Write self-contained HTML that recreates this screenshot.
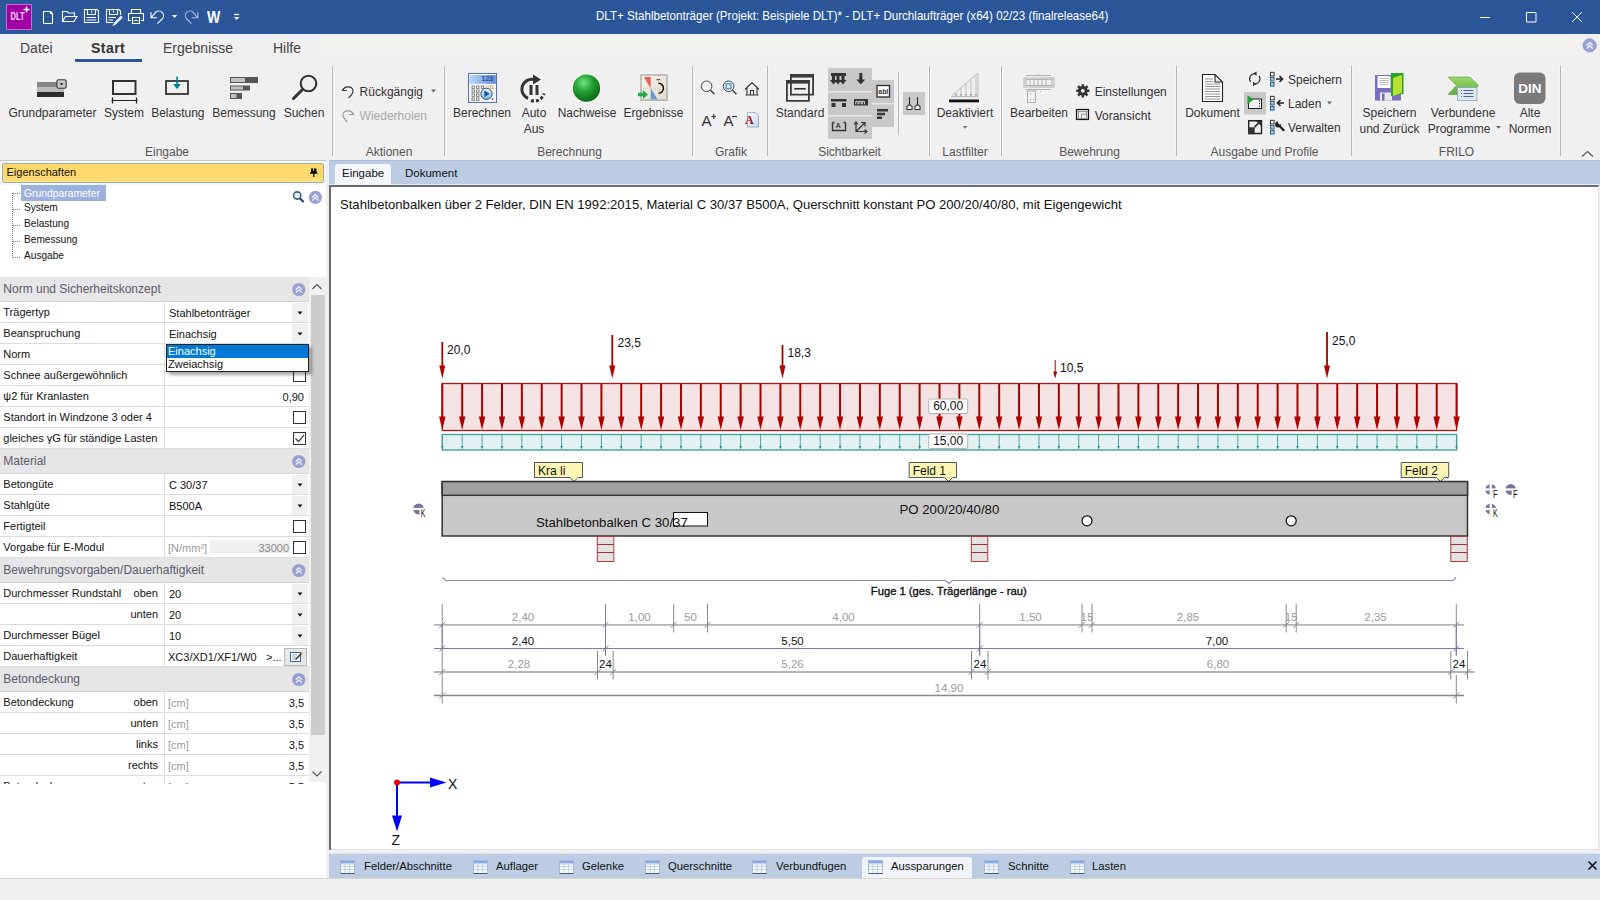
<!DOCTYPE html>
<html><head><meta charset="utf-8"><title>DLT+</title>
<style>
html,body{margin:0;padding:0;}
body{width:1600px;height:900px;overflow:hidden;position:relative;background:#f0f0f0;font-family:"Liberation Sans", sans-serif;}
.t{position:absolute;white-space:nowrap;line-height:1;}
.r{position:absolute;}
svg{position:absolute;overflow:visible;}
</style></head><body>

<div class="r" style="left:0px;top:0px;width:1600px;height:34px;background:#2b579a;"></div>
<div class="r" style="left:6px;top:4px;width:26px;height:26px;background:#a100a6;box-sizing:border-box;border:1px solid #c46fc6;"></div>
<svg style="left:0;top:0" width="40" height="34" viewBox="0 0 40 34"><text x="10.5" y="20.5" font-family="Liberation Sans" font-weight="bold" font-size="10" fill="#ffd6ff" transform="scale(1,1.15) translate(0,-2.9)" textLength="14" lengthAdjust="spacingAndGlyphs">DLT</text><path d="M23.5 9.5h6M26.5 6.5v6" stroke="#fff" stroke-width="1.4"/></svg>
<svg style="left:0;top:0" width="260" height="34" viewBox="0 0 260 34" fill="none" stroke="#fff" stroke-width="1.1">
<path d="M43.5 11.5H50.5L52.5 13.5V23.5H43.5Z M50.5 11.5V13.5H52.5"/>
<path d="M62.5 21.5V11.5H67L68.5 13H74.5V16 M62.5 21.5L65.5 16.5H77L74 21.5Z"/>
<path d="M84.5 9.5H97L98.5 11V22.5H84.5Z M87.5 9.5V14.5H95.5V9.5 M91.5 10.5V12.5 M86.5 17.5H96 M86.5 20H96"/>
<path d="M106.5 9.5H119L120.5 11V15 M106.5 9.5V22.5H113 M109.5 9.5V14.5H117.5V9.5 M113.5 10.5V12.5 M108.5 17.5H116 M108.5 20H113 M121 16.5L114.5 23L113.5 25L115.5 24L122 17.5Z"/>
<path d="M131.5 13V9.5H140.5V13 M131 20.5H128.5V13.5H143.5V20.5H141 M132.5 17.5H139.5V23.5H132.5Z M134 20.5H138"/>
<path d="M151 12.2V17.8H156.9 M151.3 17.5L155.75 12.25A4.6 4.6 0 0 1 162.25 18.75L157.4 23.6"/>
<path d="M172 15h5.2l-2.6 3z" fill="#fff" stroke="none"/>
<path d="M197.8 12.2V17.8H191.9 M197.5 17.5L193.05 12.25A4.6 4.6 0 0 0 186.55 18.75L191.4 23.6" stroke="#a9bde3"/>
<path d="M234 14.5h5.2" stroke-width="1.3"/><path d="M233.8 17h5.6l-2.8 3z" fill="#fff" stroke="none"/>
</svg>
<div class="t" style="left:206.5px;top:9.66px;font-size:16px;color:#fff;font-weight:bold;transform:scaleX(0.88);transform-origin:0 0;">W</div>
<div class="t" style="left:596px;top:9.53px;font-size:12.6px;color:#fff;font-weight:normal;transform:scaleX(0.9206);transform-origin:0 0;">DLT+ Stahlbetonträger (Projekt: Beispiele DLT)* - DLT+ Durchlaufträger (x64) 02/23 (finalrelease64)</div>
<svg style="left:1460px;top:0" width="140" height="34" viewBox="1460 0 140 34" fill="none" stroke="#fff" stroke-width="1">
<path d="M1480 17.5h10"/>
<path d="M1526.5 12.5h9.5v9.5h-9.5z"/>
<path d="M1572 12l10 10 M1582 12l-10 10"/>
</svg>
<div class="r" style="left:0px;top:34px;width:1600px;height:126px;background:#f0f0f0;"></div>
<div class="r" style="left:320px;top:35px;width:1258px;height:27px;background:#f2f1ef;"></div>
<div class="r" style="left:0px;top:34px;width:1600px;height:1px;background:#e8f0f8;"></div>
<div class="t" style="left:20px;top:41.15px;font-size:14px;color:#444;font-weight:normal;">Datei</div>
<div class="t" style="left:91px;top:41.15px;font-size:14px;color:#333;font-weight:bold;letter-spacing:0.45px">Start</div>
<div class="t" style="left:163px;top:41.15px;font-size:14px;color:#444;font-weight:normal;">Ergebnisse</div>
<div class="t" style="left:273px;top:41.15px;font-size:14px;color:#444;font-weight:normal;">Hilfe</div>
<div class="r" style="left:75px;top:59px;width:67px;height:3px;background:#2b579a;"></div>
<div class="r" style="left:331px;top:66px;width:3px;height:90px;background:#f6f6f6;"></div>
<div class="r" style="left:332px;top:66px;width:1px;height:90px;background:#b4b4b4;"></div>
<div class="r" style="left:443px;top:66px;width:3px;height:90px;background:#f6f6f6;"></div>
<div class="r" style="left:444px;top:66px;width:1px;height:90px;background:#b4b4b4;"></div>
<div class="r" style="left:691px;top:66px;width:3px;height:90px;background:#f6f6f6;"></div>
<div class="r" style="left:692px;top:66px;width:1px;height:90px;background:#b4b4b4;"></div>
<div class="r" style="left:766px;top:66px;width:3px;height:90px;background:#f6f6f6;"></div>
<div class="r" style="left:767px;top:66px;width:1px;height:90px;background:#b4b4b4;"></div>
<div class="r" style="left:928px;top:66px;width:3px;height:90px;background:#f6f6f6;"></div>
<div class="r" style="left:929px;top:66px;width:1px;height:90px;background:#b4b4b4;"></div>
<div class="r" style="left:1000px;top:66px;width:3px;height:90px;background:#f6f6f6;"></div>
<div class="r" style="left:1001px;top:66px;width:1px;height:90px;background:#b4b4b4;"></div>
<div class="r" style="left:1175px;top:66px;width:3px;height:90px;background:#f6f6f6;"></div>
<div class="r" style="left:1176px;top:66px;width:1px;height:90px;background:#b4b4b4;"></div>
<div class="r" style="left:1350px;top:66px;width:3px;height:90px;background:#f6f6f6;"></div>
<div class="r" style="left:1351px;top:66px;width:1px;height:90px;background:#b4b4b4;"></div>
<div class="r" style="left:1559px;top:66px;width:3px;height:90px;background:#f6f6f6;"></div>
<div class="r" style="left:1560px;top:66px;width:1px;height:90px;background:#b4b4b4;"></div>
<div class="r" style="left:897px;top:72px;width:3px;height:63px;background:#f6f6f6;"></div>
<div class="r" style="left:898px;top:72px;width:1px;height:63px;background:#b4b4b4;"></div>
<div class="t" style="left:-133px;width:600px;text-align:center;top:145.84px;font-size:12px;color:#555;font-weight:normal;">Eingabe</div>
<div class="t" style="left:89px;width:600px;text-align:center;top:145.84px;font-size:12px;color:#555;font-weight:normal;">Aktionen</div>
<div class="t" style="left:269.5px;width:600px;text-align:center;top:145.84px;font-size:12px;color:#555;font-weight:normal;">Berechnung</div>
<div class="t" style="left:431px;width:600px;text-align:center;top:145.84px;font-size:12px;color:#555;font-weight:normal;">Grafik</div>
<div class="t" style="left:549.5px;width:600px;text-align:center;top:145.84px;font-size:12px;color:#555;font-weight:normal;">Sichtbarkeit</div>
<div class="t" style="left:665px;width:600px;text-align:center;top:145.84px;font-size:12px;color:#555;font-weight:normal;">Lastfilter</div>
<div class="t" style="left:789.5px;width:600px;text-align:center;top:145.84px;font-size:12px;color:#555;font-weight:normal;">Bewehrung</div>
<div class="t" style="left:964.5px;width:600px;text-align:center;top:145.84px;font-size:12px;color:#555;font-weight:normal;">Ausgabe und Profile</div>
<div class="t" style="left:1156.5px;width:600px;text-align:center;top:145.84px;font-size:12px;color:#555;font-weight:normal;">FRILO</div>
<div class="t" style="left:-247.5px;width:600px;text-align:center;top:106.54px;font-size:12px;color:#333;font-weight:normal;">Grundparameter</div>
<div class="t" style="left:-176px;width:600px;text-align:center;top:106.54px;font-size:12px;color:#333;font-weight:normal;">System</div>
<div class="t" style="left:-122.19999999999999px;width:600px;text-align:center;top:106.54px;font-size:12px;color:#333;font-weight:normal;">Belastung</div>
<div class="t" style="left:-56px;width:600px;text-align:center;top:106.54px;font-size:12px;color:#333;font-weight:normal;">Bemessung</div>
<div class="t" style="left:4px;width:600px;text-align:center;top:106.54px;font-size:12px;color:#333;font-weight:normal;">Suchen</div>
<div class="t" style="left:182px;width:600px;text-align:center;top:106.54px;font-size:12px;color:#333;font-weight:normal;">Berechnen</div>
<div class="t" style="left:234px;width:600px;text-align:center;top:106.54px;font-size:12px;color:#333;font-weight:normal;">Auto</div>
<div class="t" style="left:287px;width:600px;text-align:center;top:106.54px;font-size:12px;color:#333;font-weight:normal;">Nachweise</div>
<div class="t" style="left:353.5px;width:600px;text-align:center;top:106.54px;font-size:12px;color:#333;font-weight:normal;">Ergebnisse</div>
<div class="t" style="left:500px;width:600px;text-align:center;top:106.54px;font-size:12px;color:#333;font-weight:normal;">Standard</div>
<div class="t" style="left:665px;width:600px;text-align:center;top:106.54px;font-size:12px;color:#333;font-weight:normal;">Deaktiviert</div>
<div class="t" style="left:739px;width:600px;text-align:center;top:106.54px;font-size:12px;color:#333;font-weight:normal;">Bearbeiten</div>
<div class="t" style="left:912.5px;width:600px;text-align:center;top:106.54px;font-size:12px;color:#333;font-weight:normal;">Dokument</div>
<div class="t" style="left:1089.5px;width:600px;text-align:center;top:106.54px;font-size:12px;color:#333;font-weight:normal;">Speichern</div>
<div class="t" style="left:1163px;width:600px;text-align:center;top:106.54px;font-size:12px;color:#333;font-weight:normal;">Verbundene</div>
<div class="t" style="left:1230px;width:600px;text-align:center;top:106.54px;font-size:12px;color:#333;font-weight:normal;">Alte</div>
<div class="t" style="left:234px;width:600px;text-align:center;top:122.54px;font-size:12px;color:#333;font-weight:normal;">Aus</div>
<div class="t" style="left:1089.5px;width:600px;text-align:center;top:122.54px;font-size:12px;color:#333;font-weight:normal;">und Zurück</div>
<div class="t" style="left:1159px;width:600px;text-align:center;top:122.54px;font-size:12px;color:#333;font-weight:normal;">Programme</div>
<div class="t" style="left:1230px;width:600px;text-align:center;top:122.54px;font-size:12px;color:#333;font-weight:normal;">Normen</div>
<div class="t" style="left:359.6px;top:85.84px;font-size:12px;color:#333;font-weight:normal;">Rückgängig</div>
<div class="t" style="left:359.6px;top:109.84px;font-size:12px;color:#a8a8a8;font-weight:normal;">Wiederholen</div>
<div class="t" style="left:1094.7px;top:85.84px;font-size:12px;color:#333;font-weight:normal;">Einstellungen</div>
<div class="t" style="left:1094.7px;top:109.84px;font-size:12px;color:#333;font-weight:normal;">Voransicht</div>
<div class="t" style="left:1288px;top:73.84px;font-size:12px;color:#333;font-weight:normal;">Speichern</div>
<div class="t" style="left:1288px;top:97.84px;font-size:12px;color:#333;font-weight:normal;">Laden</div>
<div class="t" style="left:1288px;top:121.84px;font-size:12px;color:#333;font-weight:normal;">Verwalten</div>
<svg style="left:0;top:34px" width="1600" height="126" viewBox="0 34 1600 126">
<defs>
<radialGradient id="gs" cx="0.4" cy="0.3" r="0.75"><stop offset="0" stop-color="#6fe07a"/><stop offset="0.45" stop-color="#23a032"/><stop offset="1" stop-color="#0b5f15"/></radialGradient>
<linearGradient id="calhd" x1="0" y1="0" x2="1" y2="0"><stop offset="0" stop-color="#bcd6f5"/><stop offset="1" stop-color="#5b8fd8"/></linearGradient>
</defs>
<!-- Grundparameter -->
<rect x="37" y="82" width="27" height="5" fill="#858585"/>
<rect x="37" y="87" width="27" height="5" fill="#bdbdbd"/>
<rect x="37" y="92" width="27" height="5" fill="#2e2e2e"/>
<rect x="56.9" y="79.7" width="9.3" height="8.6" rx="1.5" fill="#c6c6c6" stroke="#3a3a3a" stroke-width="1.1"/>
<path d="M59.6 83.2h3.9l-1.95 2.1z" fill="#111"/>
<!-- System -->
<rect x="113" y="81" width="22.5" height="13" fill="none" stroke="#333" stroke-width="2"/>
<path d="M111.5 100.5h26 M112.5 97.5v6 M136.5 97.5v6" stroke="#222" stroke-width="1.2" fill="none"/>
<!-- Belastung -->
<rect x="166" y="81" width="22" height="13" fill="none" stroke="#333" stroke-width="1.8"/>
<path d="M177 76.5v8" stroke="#00808a" stroke-width="1.6"/>
<path d="M173 84h8l-4 5z" fill="#00808a"/>
<!-- Bemessung -->
<rect x="230" y="77" width="28" height="6" fill="#555"/><rect x="231" y="78" width="14" height="4" fill="#c3c3c3"/>
<rect x="230" y="85.5" width="20" height="5" fill="#555"/><rect x="231" y="86.5" width="12" height="3" fill="#c3c3c3"/>
<rect x="230" y="93" width="12" height="6" fill="#555"/><rect x="231" y="94" width="5.5" height="4" fill="#c3c3c3"/>
<!-- Suchen -->
<circle cx="308.5" cy="83.5" r="7.8" fill="none" stroke="#333" stroke-width="2"/>
<path d="M302.5 89.5l-9 9" stroke="#333" stroke-width="3" stroke-linecap="round"/>
<!-- Undo / redo small -->
<path d="M342 90.5l3.5-3.5 M342 90.5h4.8 M342.5 90c2.5-4 9.5-4.5 10.5 0.5 0.6 2.8-2 5-4.5 7.5" stroke="#333" stroke-width="1.1" fill="none"/>
<path d="M431 89.5h5l-2.5 3z" fill="#666"/>
<path d="M354 114.5l-3.5-3.5 M354 114.5h-4.8 M353.5 114c-2.5-4-9.5-4.5-10.5 0.5-0.6 2.8 2 5 4.5 7.5" stroke="#999" stroke-width="1.1" fill="none"/>
<!-- Berechnen -->
<linearGradient id="pc" x1="0" y1="0" x2="0" y2="1"><stop offset="0" stop-color="#e6f6ff"/><stop offset="1" stop-color="#6cb8ee"/></linearGradient>
<rect x="468.5" y="73.5" width="28" height="29" fill="#f4f8fd" stroke="#5a78a8" stroke-width="1.1"/>
<rect x="469.2" y="74.8" width="26.6" height="9" fill="url(#calhd)"/>
<path d="M469.2 74.6h26.6" stroke="#fff" stroke-width="0.8"/>
<text x="481.5" y="81.2" font-family="Liberation Sans" font-weight="bold" font-size="7" fill="#1f4fa0">123</text>
<g fill="#fff" stroke="#777" stroke-width="0.9">
<rect x="472" y="86" width="2.4" height="2.4"/><rect x="476.6" y="86" width="2.4" height="2.4"/><rect x="481.2" y="86" width="2.4" height="2.4"/><rect x="485.8" y="86" width="2.4" height="2.4" stroke="#d8b890"/><rect x="490.4" y="86" width="2.4" height="2.4" stroke="#e0a040"/>
<rect x="472" y="90" width="2.4" height="2.4"/><rect x="476.6" y="90" width="2.4" height="2.4"/>
<rect x="472" y="94" width="2.4" height="2.4"/><rect x="476.6" y="94" width="2.4" height="2.4"/>
<rect x="472" y="98" width="2.4" height="2.4"/><rect x="476.6" y="98" width="2.4" height="2.4"/>
</g>
<circle cx="486.5" cy="93.8" r="5.6" fill="url(#pc)" stroke="#24405e" stroke-width="0.9"/>
<path d="M484.4 90.6v6.4l5.2-3.2z" fill="#1a4f9e"/>
<circle cx="492.5" cy="99" r="0.9" fill="#d04030"/>
<!-- Auto Aus -->
<path d="M528 98.5a10 10 0 0 1 6-19" fill="none" stroke="#333" stroke-width="3"/>
<path d="M533 74.5l8 5-8 5z" fill="#333"/>
<path d="M531 100.5a10 10 0 0 0 13-7" fill="none" stroke="#333" stroke-width="3" stroke-dasharray="3 2"/>
<rect x="529.5" y="85" width="3" height="10" fill="#333"/><rect x="535.5" y="85" width="3" height="10" fill="#333"/>
<!-- Nachweise -->
<circle cx="586.5" cy="88.2" r="13.6" fill="url(#gs)"/>
<!-- Ergebnisse -->
<linearGradient id="erg" x1="0" y1="0" x2="1" y2="1"><stop offset="0" stop-color="#f6f3ea"/><stop offset="1" stop-color="#e2dccb"/></linearGradient>
<rect x="641" y="75" width="26" height="25.2" fill="url(#erg)" stroke="#b5b5b5" stroke-width="1.6"/>
<path d="M643.9 77H650.7V88.3z" fill="#ee5a5a"/>
<path d="M650.7 88.3V99.6H657.7z" fill="#6f98cc"/>
<path d="M643 88.2H661" stroke="#bbb" stroke-width="0.7" stroke-dasharray="1 1"/>
<path d="M658.3 83.2A5 5 0 0 1 658.5 93.3" fill="none" stroke="#111" stroke-width="1.5"/>
<path d="M656.6 80.3l0.9-1.3 0.9 1.3 0.9-1.3 0.9 1.3" fill="none" stroke="#222" stroke-width="0.8"/>
<path d="M638 92.8h5v-2.6l5 4.3-5 4.3v-2.6h-5z" fill="#20aa48"/>
</svg>
<svg style="left:0;top:34px" width="1600" height="126" viewBox="0 34 1600 126">
<defs>
<linearGradient id="docg" x1="0" y1="0" x2="1" y2="1"><stop offset="0" stop-color="#ffffff"/><stop offset="1" stop-color="#c5d4ec"/></linearGradient>
<linearGradient id="grg" x1="0" y1="0" x2="0" y2="1"><stop offset="0" stop-color="#9ad86a"/><stop offset="1" stop-color="#5cb040"/></linearGradient>
</defs>
<!-- Grafik -->
<circle cx="706.6" cy="86.3" r="5.3" fill="none" stroke="#444" stroke-width="1"/>
<path d="M710.5 90.2l4 4" stroke="#444" stroke-width="1.6"/>
<circle cx="728.6" cy="86.3" r="5.3" fill="none" stroke="#444" stroke-width="1"/>
<path d="M732.5 90.2l4 4" stroke="#444" stroke-width="1.6"/>
<rect x="726" y="83.8" width="5" height="5" fill="#cde6f5" stroke="#2a7ab0" stroke-width="1"/>
<path d="M745 89.5l7-7 7 7 M747 88v7h3.5v-4.5h3v4.5h3.5v-7 M745.5 95h13" fill="none" stroke="#333" stroke-width="1.1"/>
<text x="701.5" y="126" font-family="Liberation Sans" font-size="15" fill="#333">A</text>
<path d="M711.5 116.5h4.5 M713.75 114v5" stroke="#333" stroke-width="1.2"/>
<text x="723.5" y="126" font-family="Liberation Sans" font-size="15" fill="#333">A</text>
<path d="M732 116.5h5" stroke="#333" stroke-width="1.2"/>
<path d="M747.5 112.5h8l3 3v11.5h-11z" fill="url(#docg)" stroke="#8aa0c0" stroke-width="0.8"/>
<text x="745" y="124" font-family="Liberation Serif" font-weight="bold" font-size="12" fill="#a01010">A</text>
<!-- Standard -->
<path d="M790.9 74.9H813.1V94.7H790.9Z M786.9 80.9H808.9V100.9H786.9Z" fill="none" stroke="#3a3a3a" stroke-width="1.8"/>
<rect x="790" y="74" width="24" height="3.6" fill="#3a3a3a"/><rect x="786" y="80" width="24" height="3.6" fill="#3a3a3a"/>
<path d="M794.3 88.8H805.7" stroke="#333" stroke-width="1.7"/>
<!-- Sichtbarkeit blocks -->
<rect x="828" y="68" width="44" height="71" fill="#c8c8c8"/>
<rect x="872" y="80" width="22" height="47" fill="#c8c8c8"/>
<rect x="828" y="91" width="44" height="1.5" fill="#e6e6e6"/>
<rect x="828" y="115" width="44" height="1.5" fill="#e6e6e6"/>
<rect x="872" y="103" width="22" height="1.5" fill="#e6e6e6"/>
<rect x="903" y="92" width="22" height="23" fill="#c8c8c8"/>
<g fill="#333">
<path d="M831 73h15v3h-1.5v4h2l-3.5 4.5-3.5-4.5h2v-4h-2v4h2l-3.5 4.5-3.5-4.5h2v-4h-1.5v4h2l-3.5 4.5-3.5-4.5h2v-4h-1z"/>
<path d="M859.3 73h3v6.5h3l-4.5 5-4.5-5h3z"/>
<path d="M831 99h15.5v2.6h-15.5z M831.5 103h4v4h-4z M842 103h4v4h-4z"/>
<path d="M854 99h14v6.5h-14z"/>
<path d="M877 109h11v2.5h-11z M877 112.8h8v2.5h-8z M877 116.5h5v2.5h-5z"/>
</g>
<path d="M855.8 104.3v-3h2.2v3 M859 104.3v-3h2.2v3 M862.2 104.3v-3h2.2v3" fill="none" stroke="#e8e8e8" stroke-width="0.9"/>
<path d="M832.5 122.5v8h13v-8 M832.5 122.5h2 M845.5 122.5h-2" fill="none" stroke="#333" stroke-width="1.4"/>
<text x="835.5" y="127.5" font-family="Liberation Sans" font-weight="bold" font-size="7.5" fill="#444">A</text>
<path d="M856 122v9.5h10.5 M856 131.5l8.5-8.5 M861 122.5h4v4" fill="none" stroke="#333" stroke-width="1.2"/>
<path d="M854 124.5l2-2.5 2 2.5 M864.5 129.5l2.5 2-2.5 2" fill="none" stroke="#333" stroke-width="1.1"/>
<rect x="877" y="85.5" width="12.5" height="11.5" fill="#fff" stroke="#333" stroke-width="1.4"/>
<text x="878.3" y="94.3" font-family="Liberation Sans" font-weight="bold" font-size="7" fill="#333" textLength="10" lengthAdjust="spacingAndGlyphs">abl</text>
<path d="M909.5 97v7.5 M917.5 97v7.5" stroke="#333" stroke-width="1.1"/>
<path d="M907 109.5v-3l2.5-2 2.5 2v3z M915 109.5v-3l2.5-2 2.5 2v3z" fill="#fff" stroke="#333" stroke-width="1.1"/>
<!-- Lastfilter -->
<path d="M951 96.5l27-23.5v23.5z" fill="none" stroke="#b5b5b5" stroke-width="0.9"/>
<path d="M956 92.5v4 M961 88v8.5 M966 84v12.5 M971 79.5v17 M976 75v21.5" stroke="#b5b5b5" stroke-width="0.9"/>
<path d="M954.5 94h3l-1.5 2.5z M959.5 94h3l-1.5 2.5z M964.5 94h3l-1.5 2.5z M969.5 94h3l-1.5 2.5z M974.5 94h3l-1.5 2.5z" fill="#aaa"/>
<rect x="949" y="99.5" width="30" height="2.8" fill="#111"/>
<path d="M962.5 126h5l-2.5 2.8z" fill="#777"/>
<!-- Bewehrung -->
<g fill="none" stroke="#aaa" stroke-width="0.9">
<path d="M1026 75.5h25 M1038.5 73.5v1"/>
<rect x="1024" y="78" width="30" height="9"/>
<rect x="1026" y="79.5" width="26" height="6"/>
<path d="M1030 79.5v6 M1034 79.5v6 M1038 79.5v6 M1042 79.5v6 M1046 79.5v6"/>
<path d="M1026 89.5h25 M1040 91.5h1"/>
<rect x="1027.5" y="91" width="8" height="11.5"/>
</g>
<path d="M1030 99.5h1 M1033 99.5h1 M1030 94h1" stroke="#888" stroke-width="0.8"/>
<g transform="translate(1082.8,90.8)">
<circle r="4.8" fill="#333"/>
<path d="M-1.3 -6.6h2.6v13.2h-2.6z M-6.6 -1.3v2.6h13.2v-2.6z" fill="#333"/>
<path d="M-1.3 -6.6h2.6v13.2h-2.6z M-6.6 -1.3v2.6h13.2v-2.6z" fill="#333" transform="rotate(45)"/>
<circle r="1.9" fill="#f1f1f1"/>
</g>
<rect x="1076.5" y="109.5" width="12" height="10" fill="none" stroke="#111" stroke-width="1.2"/>
<path d="M1078.3 110.6v8.8 M1086.7 110.6v8.8 M1077.4 111.6h10.2 M1077.4 118.4h10.2 M1081.5 118.4v-4.2h5.2" fill="none" stroke="#888" stroke-width="0.9"/>
<!-- Ausgabe und Profile -->
<path d="M1202.5 74.5h12.5l7.5 7.5v19.5h-20z M1215 74.5v7.5h7.5" fill="#fff" stroke="#222" stroke-width="1.1"/>
<path d="M1205 79h8 M1205 81.5h8 M1205 84h15 M1205 86.5h15 M1205 89h15 M1205 91.5h15 M1205 94h15 M1205 96.5h15 M1205 99h15" stroke="#666" stroke-width="0.7"/>
<path d="M1250.6 81.8A5.2 5.2 0 0 1 1255.5 73.6 M1259 75.8A5.2 5.2 0 0 1 1254.1 84" fill="none" stroke="#333" stroke-width="1.2"/>
<path d="M1256.6 71.4l-3.6 2.2 3.6 2.2z M1253 81.8l3.6 2.2-3.6 2.2z" fill="#333"/>
<rect x="1244" y="92" width="22" height="22.5" fill="#c8c8c8"/>
<rect x="1248.5" y="99" width="13" height="9.5" fill="#f4f4f4" stroke="#222" stroke-width="1"/>
<path d="M1259.5 100.5v1.2 M1259.5 103v1.2 M1259.5 105.5v1.2" stroke="#222" stroke-width="1"/>
<path d="M1247.5 95.3v8.6l6.5-4.3z" fill="#2a9a3a"/>
<path d="M1248.7 120.7h12.8v12.8h-12.8z" fill="none" stroke="#222" stroke-width="1.4"/>
<rect x="1248" y="127.3" width="6.7" height="6.9" fill="#333"/>
<path d="M1254.5 127.2l5.5-5.5" fill="none" stroke="#333" stroke-width="1.8"/>
<path d="M1256 121h5v5z" fill="#333"/>
<g stroke-width="0.9">
<rect x="1270.5" y="72.3" width="3.6" height="3.6" fill="#fff" stroke="#222"/><rect x="1270.5" y="77.4" width="3.6" height="3.6" fill="#9cc8e6" stroke="#2a5a80"/><rect x="1270.5" y="82.5" width="3.6" height="3.6" fill="#9cc8e6" stroke="#2a5a80"/>
<rect x="1270.5" y="96.3" width="3.6" height="3.6" fill="#fff" stroke="#222"/><rect x="1270.5" y="101.4" width="3.6" height="3.6" fill="#9cc8e6" stroke="#2a5a80"/><rect x="1270.5" y="106.5" width="3.6" height="3.6" fill="#9cc8e6" stroke="#2a5a80"/>
<rect x="1270.5" y="120.3" width="3.6" height="3.6" fill="#fff" stroke="#222"/><rect x="1270.5" y="125.4" width="3.6" height="3.6" fill="#9cc8e6" stroke="#2a5a80"/><rect x="1270.5" y="130.5" width="3.6" height="3.6" fill="#9cc8e6" stroke="#2a5a80"/>
</g>
<path d="M1276 79h6.5 M1279.5 76l3 3-3 3 M1284 103h-6.5 M1280.5 100l-3 3 3 3" fill="none" stroke="#222" stroke-width="1.6"/>
<path d="M1279.8 126.3l3.8 3.8" fill="none" stroke="#222" stroke-width="2.2" stroke-linecap="round"/>
<path d="M1278.3 121.5a3 3 0 1 0 2.8 2.8l-1.6 0.3-1.5-1.5z" fill="#222"/>
<path d="M1327 101.5h5l-2.5 3z" fill="#666"/>
<!-- FRILO -->
<rect x="1375" y="75" width="26" height="25.5" fill="#7c6cc4"/>
<rect x="1377.5" y="76" width="13" height="12" fill="#fff"/>
<path d="M1379 78.5h10 M1379 80.5h10 M1379 82.5h10 M1379 84.5h10" stroke="#9a9a9a" stroke-width="0.6"/>
<rect x="1380" y="92.5" width="12" height="8" fill="#e8e8e8"/>
<rect x="1382" y="93.5" width="2.5" height="7" fill="#7c6cc4"/>
<path d="M1391 73h12.5v21l-12.5 2z" fill="#2ca02c"/>
<path d="M1393 78l9-3v18l-9 3z" fill="#b8e030"/>
<path d="M1448 77h22l8.5 8.5-8.5 9h-22l8.5-9z" fill="url(#grg)" stroke="#5aa040" stroke-width="0.6"/>
<rect x="1457.5" y="87.5" width="19.5" height="13" fill="#dfe8f2" stroke="#8aa0b8" stroke-width="0.8"/>
<path d="M1461 90.5h1 M1463.5 90.5h10 M1461 93.5h1 M1463.5 93.5h10 M1461 96.5h1 M1463.5 96.5h10" stroke="#3a5a7a" stroke-width="0.9"/>
<path d="M1496 126h5l-2.5 2.8z" fill="#666"/>
<rect x="1514" y="72.5" width="31.5" height="31.5" rx="6" fill="#7a7a7a"/>
<text x="1529.8" y="93" text-anchor="middle" font-family="Liberation Sans" font-weight="bold" font-size="13.5" fill="#fff">DIN</text>
<!-- collapse ^ and help -->
<path d="M1582 156.5l5.5-5 5.5 5" fill="none" stroke="#555" stroke-width="1.1"/>
<circle cx="1589.6" cy="45.4" r="6.6" fill="#9aa0d4" stroke="#8890cc" stroke-width="0.8"/>
<path d="M1586.7 45.5l3-3 3 3 M1586.7 48.5l3-3 3 3" fill="none" stroke="#fff" stroke-width="1.2"/>
</svg>
<div class="r" style="left:0px;top:160px;width:326px;height:718px;background:#ffffff;"></div>
<div class="r" style="left:0px;top:160px;width:326px;height:25px;background:#eef7fc;"></div>
<div class="r" style="left:0px;top:160px;width:326px;height:1px;background:#c8c8cc;"></div>
<div class="r" style="left:326px;top:160px;width:4px;height:718px;background:#f0f0f0;"></div>
<div class="r" style="left:2px;top:163px;width:322px;height:20px;background:linear-gradient(#fdd76a,#fdd86e 70%,#fee584);box-sizing:border-box;border:1px solid #a3aea8;border-radius:2px;"></div>
<div class="t" style="left:6.5px;top:167.39px;font-size:11px;color:#111;font-weight:normal;">Eigenschaften</div>
<svg style="left:300px;top:160px" width="30" height="50" viewBox="300 160 30 50">
<path d="M311 168.5h5.5v4h-5.5z M310 172.5h7.5v1.2h-7.5z" fill="#000"/><path d="M313.5 168.5v2.5" stroke="#fdd876" stroke-width="1"/>
<path d="M313.75 173.5v3.5" stroke="#000" stroke-width="1.2"/>
<circle cx="297.2" cy="195.5" r="3.6" fill="none" stroke="#2c5d98" stroke-width="1.6"/>
<path d="M299.8 198.2l3.8 3.8" stroke="#1f3f68" stroke-width="2"/>
<circle cx="315.4" cy="197.3" r="6.6" fill="#9aa0d4"/>
<path d="M312.4 197.5l3-3 3 3 M312.4 200.5l3-3 3 3" fill="none" stroke="#fff" stroke-width="1.1"/>
</svg>
<svg style="left:0;top:183px" width="120" height="90" viewBox="0 183 120 90">
<path d="M12.5 193v65 M13 193.5h8 M13 209.5h8 M13 225.5h8 M13 241.5h8 M13 257.5h8" stroke="#808080" stroke-width="1" stroke-dasharray="1 1" fill="none"/>
</svg>
<div class="r" style="left:21px;top:185px;width:85px;height:15.5px;background:#9bb1de;"></div>
<div class="t" style="left:24px;top:187.99px;font-size:11px;color:#fff;font-weight:normal;transform:scaleX(0.94);transform-origin:0 0;">Grundparameter</div>
<div class="t" style="left:24px;top:202.19px;font-size:11px;color:#111;font-weight:normal;transform:scaleX(0.92);transform-origin:0 0;">System</div>
<div class="t" style="left:24px;top:218.19px;font-size:11px;color:#111;font-weight:normal;transform:scaleX(0.92);transform-origin:0 0;">Belastung</div>
<div class="t" style="left:24px;top:234.19px;font-size:11px;color:#111;font-weight:normal;transform:scaleX(0.92);transform-origin:0 0;">Bemessung</div>
<div class="t" style="left:24px;top:250.19px;font-size:11px;color:#111;font-weight:normal;transform:scaleX(0.92);transform-origin:0 0;">Ausgabe</div>
<div class="r" style="left:0px;top:277px;width:309px;height:506px;background:#ffffff;"></div>
<div class="r" style="left:0px;top:277px;width:309px;height:25px;background:#e6e6e6;"></div>
<div class="r" style="left:0px;top:301px;width:309px;height:1px;background:#d4d4d4;"></div>
<div class="t" style="left:3.3px;top:283.14px;font-size:12px;color:#5b5b6b;font-weight:normal;">Norm und Sicherheitskonzept</div>
<div class="r" style="left:0px;top:322px;width:309px;height:1px;background:#dcdcdc;"></div>
<div class="r" style="left:164px;top:302px;width:1px;height:21px;background:#dcdcdc;"></div>
<div class="t" style="left:3.3px;top:307.19px;font-size:11px;color:#111;font-weight:normal;">Trägertyp</div>
<div class="r" style="left:292px;top:303px;width:16px;height:19px;background:#f0f0f0;"></div>
<div class="t" style="left:169px;top:307.69px;font-size:11px;color:#111;font-weight:normal;">Stahlbetonträger</div>
<div class="r" style="left:0px;top:343px;width:309px;height:1px;background:#dcdcdc;"></div>
<div class="r" style="left:164px;top:323px;width:1px;height:21px;background:#dcdcdc;"></div>
<div class="t" style="left:3.3px;top:328.19px;font-size:11px;color:#111;font-weight:normal;">Beanspruchung</div>
<div class="r" style="left:292px;top:324px;width:16px;height:19px;background:#f0f0f0;"></div>
<div class="t" style="left:169px;top:328.69px;font-size:11px;color:#111;font-weight:normal;">Einachsig</div>
<div class="r" style="left:0px;top:364px;width:309px;height:1px;background:#dcdcdc;"></div>
<div class="r" style="left:164px;top:344px;width:1px;height:21px;background:#dcdcdc;"></div>
<div class="t" style="left:3.3px;top:349.19px;font-size:11px;color:#111;font-weight:normal;">Norm</div>
<div class="r" style="left:0px;top:385px;width:309px;height:1px;background:#dcdcdc;"></div>
<div class="r" style="left:164px;top:365px;width:1px;height:21px;background:#dcdcdc;"></div>
<div class="t" style="left:3.3px;top:370.19px;font-size:11px;color:#111;font-weight:normal;">Schnee außergewöhnlich</div>
<div class="r" style="left:0px;top:406px;width:309px;height:1px;background:#dcdcdc;"></div>
<div class="r" style="left:164px;top:386px;width:1px;height:21px;background:#dcdcdc;"></div>
<div class="t" style="left:3.3px;top:391.19px;font-size:11px;color:#111;font-weight:normal;">ψ2 für Kranlasten</div>
<div class="t" style="right:1296px;top:391.69px;font-size:11px;color:#111;font-weight:normal;">0,90</div>
<div class="r" style="left:0px;top:427px;width:309px;height:1px;background:#dcdcdc;"></div>
<div class="r" style="left:164px;top:407px;width:1px;height:21px;background:#dcdcdc;"></div>
<div class="t" style="left:3.3px;top:412.19px;font-size:11px;color:#111;font-weight:normal;">Standort in Windzone 3 oder 4</div>
<div class="r" style="left:0px;top:448px;width:309px;height:1px;background:#dcdcdc;"></div>
<div class="r" style="left:164px;top:428px;width:1px;height:21px;background:#dcdcdc;"></div>
<div class="t" style="left:3.3px;top:433.19px;font-size:11px;color:#111;font-weight:normal;">gleiches γG für ständige Lasten</div>
<div class="r" style="left:0px;top:449px;width:309px;height:25px;background:#e6e6e6;"></div>
<div class="r" style="left:0px;top:473px;width:309px;height:1px;background:#d4d4d4;"></div>
<div class="t" style="left:3.3px;top:455.14px;font-size:12px;color:#5b5b6b;font-weight:normal;">Material</div>
<div class="r" style="left:0px;top:494px;width:309px;height:1px;background:#dcdcdc;"></div>
<div class="r" style="left:164px;top:474px;width:1px;height:21px;background:#dcdcdc;"></div>
<div class="t" style="left:3.3px;top:479.19px;font-size:11px;color:#111;font-weight:normal;">Betongüte</div>
<div class="r" style="left:292px;top:475px;width:16px;height:19px;background:#f0f0f0;"></div>
<div class="t" style="left:169px;top:479.69px;font-size:11px;color:#111;font-weight:normal;">C 30/37</div>
<div class="r" style="left:0px;top:515px;width:309px;height:1px;background:#dcdcdc;"></div>
<div class="r" style="left:164px;top:495px;width:1px;height:21px;background:#dcdcdc;"></div>
<div class="t" style="left:3.3px;top:500.19px;font-size:11px;color:#111;font-weight:normal;">Stahlgüte</div>
<div class="r" style="left:292px;top:496px;width:16px;height:19px;background:#f0f0f0;"></div>
<div class="t" style="left:169px;top:500.69px;font-size:11px;color:#111;font-weight:normal;">B500A</div>
<div class="r" style="left:0px;top:536px;width:309px;height:1px;background:#dcdcdc;"></div>
<div class="r" style="left:164px;top:516px;width:1px;height:21px;background:#dcdcdc;"></div>
<div class="t" style="left:3.3px;top:521.19px;font-size:11px;color:#111;font-weight:normal;">Fertigteil</div>
<div class="r" style="left:0px;top:557px;width:309px;height:1px;background:#dcdcdc;"></div>
<div class="r" style="left:164px;top:537px;width:1px;height:21px;background:#dcdcdc;"></div>
<div class="t" style="left:3.3px;top:542.19px;font-size:11px;color:#111;font-weight:normal;">Vorgabe für E-Modul</div>
<div class="t" style="left:168px;top:542.69px;font-size:11px;color:#999;font-weight:normal;">[N/mm²]</div>
<div class="r" style="left:210px;top:540px;width:80px;height:13px;background:#f0f0f0;"></div>
<div class="t" style="right:1311px;top:542.69px;font-size:11px;color:#888;font-weight:normal;">33000</div>
<div class="r" style="left:0px;top:558px;width:309px;height:25px;background:#e6e6e6;"></div>
<div class="r" style="left:0px;top:582px;width:309px;height:1px;background:#d4d4d4;"></div>
<div class="t" style="left:3.3px;top:564.14px;font-size:12px;color:#5b5b6b;font-weight:normal;">Bewehrungsvorgaben/Dauerhaftigkeit</div>
<div class="r" style="left:0px;top:603px;width:309px;height:1px;background:#dcdcdc;"></div>
<div class="r" style="left:164px;top:583px;width:1px;height:21px;background:#dcdcdc;"></div>
<div class="t" style="left:3.3px;top:588.19px;font-size:11px;color:#111;font-weight:normal;">Durchmesser Rundstahl</div>
<div class="t" style="right:1442px;top:588.19px;font-size:11px;color:#111;font-weight:normal;">oben</div>
<div class="r" style="left:292px;top:584px;width:16px;height:19px;background:#f0f0f0;"></div>
<div class="t" style="left:169px;top:588.69px;font-size:11px;color:#111;font-weight:normal;">20</div>
<div class="r" style="left:0px;top:624px;width:309px;height:1px;background:#dcdcdc;"></div>
<div class="r" style="left:164px;top:604px;width:1px;height:21px;background:#dcdcdc;"></div>
<div class="t" style="right:1442px;top:609.19px;font-size:11px;color:#111;font-weight:normal;">unten</div>
<div class="r" style="left:292px;top:605px;width:16px;height:19px;background:#f0f0f0;"></div>
<div class="t" style="left:169px;top:609.69px;font-size:11px;color:#111;font-weight:normal;">20</div>
<div class="r" style="left:0px;top:645px;width:309px;height:1px;background:#dcdcdc;"></div>
<div class="r" style="left:164px;top:625px;width:1px;height:21px;background:#dcdcdc;"></div>
<div class="t" style="left:3.3px;top:630.19px;font-size:11px;color:#111;font-weight:normal;">Durchmesser Bügel</div>
<div class="r" style="left:292px;top:626px;width:16px;height:19px;background:#f0f0f0;"></div>
<div class="t" style="left:169px;top:630.69px;font-size:11px;color:#111;font-weight:normal;">10</div>
<div class="r" style="left:0px;top:666px;width:309px;height:1px;background:#dcdcdc;"></div>
<div class="r" style="left:164px;top:646px;width:1px;height:21px;background:#dcdcdc;"></div>
<div class="t" style="left:3.3px;top:651.19px;font-size:11px;color:#111;font-weight:normal;">Dauerhaftigkeit</div>
<div class="t" style="left:168px;top:651.69px;font-size:11px;color:#111;font-weight:normal;">XC3/XD1/XF1/W0</div>
<div class="t" style="left:266px;top:651.69px;font-size:11px;color:#111;font-weight:normal;">&gt;...</div>
<div class="r" style="left:284px;top:648px;width:23px;height:18px;background:#e8e8e8;box-sizing:border-box;border:1px solid #b8b8b8;"></div>
<div class="r" style="left:0px;top:667px;width:309px;height:25px;background:#e6e6e6;"></div>
<div class="r" style="left:0px;top:691px;width:309px;height:1px;background:#d4d4d4;"></div>
<div class="t" style="left:3.3px;top:673.14px;font-size:12px;color:#5b5b6b;font-weight:normal;">Betondeckung</div>
<div class="r" style="left:0px;top:712px;width:309px;height:1px;background:#dcdcdc;"></div>
<div class="r" style="left:164px;top:692px;width:1px;height:21px;background:#dcdcdc;"></div>
<div class="t" style="left:3.3px;top:697.19px;font-size:11px;color:#111;font-weight:normal;">Betondeckung</div>
<div class="t" style="right:1442px;top:697.19px;font-size:11px;color:#111;font-weight:normal;">oben</div>
<div class="t" style="left:168px;top:697.69px;font-size:11px;color:#999;font-weight:normal;">[cm]</div>
<div class="t" style="right:1296px;top:697.69px;font-size:11px;color:#111;font-weight:normal;">3,5</div>
<div class="r" style="left:0px;top:733px;width:309px;height:1px;background:#dcdcdc;"></div>
<div class="r" style="left:164px;top:713px;width:1px;height:21px;background:#dcdcdc;"></div>
<div class="t" style="right:1442px;top:718.19px;font-size:11px;color:#111;font-weight:normal;">unten</div>
<div class="t" style="left:168px;top:718.69px;font-size:11px;color:#999;font-weight:normal;">[cm]</div>
<div class="t" style="right:1296px;top:718.69px;font-size:11px;color:#111;font-weight:normal;">3,5</div>
<div class="r" style="left:0px;top:754px;width:309px;height:1px;background:#dcdcdc;"></div>
<div class="r" style="left:164px;top:734px;width:1px;height:21px;background:#dcdcdc;"></div>
<div class="t" style="right:1442px;top:739.19px;font-size:11px;color:#111;font-weight:normal;">links</div>
<div class="t" style="left:168px;top:739.69px;font-size:11px;color:#999;font-weight:normal;">[cm]</div>
<div class="t" style="right:1296px;top:739.69px;font-size:11px;color:#111;font-weight:normal;">3,5</div>
<div class="r" style="left:0px;top:775px;width:309px;height:1px;background:#dcdcdc;"></div>
<div class="r" style="left:164px;top:755px;width:1px;height:21px;background:#dcdcdc;"></div>
<div class="t" style="right:1442px;top:760.19px;font-size:11px;color:#111;font-weight:normal;">rechts</div>
<div class="t" style="left:168px;top:760.69px;font-size:11px;color:#999;font-weight:normal;">[cm]</div>
<div class="t" style="right:1296px;top:760.69px;font-size:11px;color:#111;font-weight:normal;">3,5</div>
<div class="r" style="left:0px;top:796px;width:309px;height:1px;background:#dcdcdc;"></div>
<div class="r" style="left:164px;top:776px;width:1px;height:21px;background:#dcdcdc;"></div>
<div class="t" style="left:3.3px;top:781.19px;font-size:11px;color:#111;font-weight:normal;">Betondeckung</div>
<div class="t" style="right:1442px;top:781.19px;font-size:11px;color:#111;font-weight:normal;">unten</div>
<div class="t" style="left:168px;top:781.69px;font-size:11px;color:#999;font-weight:normal;">[cm]</div>
<div class="t" style="right:1296px;top:781.69px;font-size:11px;color:#111;font-weight:normal;">5,5</div>
<div class="r" style="left:0px;top:784px;width:326px;height:94px;background:#ffffff;"></div>
<div class="r" style="left:309px;top:277px;width:17px;height:505px;background:#f0f0f0;"></div>
<div class="r" style="left:311px;top:295px;width:14px;height:440px;background:#cdcdcd;"></div>
<svg style="left:0;top:0" width="330" height="900" viewBox="0 0 330 900"><circle cx="298.8" cy="289.5" r="6.6" fill="#9aa0d4"/><path d="M295.8 289.7l3-3 3 3 M295.8 292.7l3-3 3 3" fill="none" stroke="#fff" stroke-width="1.1"/><path d="M297.5 311.5h5l-2.5 3z" fill="#111"/><path d="M297.5 332.5h5l-2.5 3z" fill="#111"/><rect x="293.5" y="369.5" width="12" height="12" fill="#fff" stroke="#333" stroke-width="1"/><rect x="293.5" y="411.5" width="12" height="12" fill="#fff" stroke="#333" stroke-width="1"/><rect x="293.5" y="432.5" width="12" height="12" fill="#fff" stroke="#333" stroke-width="1"/><path d="M295.5 438.5l3 3.2 5.5-6.5" fill="none" stroke="#333" stroke-width="1.2"/><circle cx="298.8" cy="461.5" r="6.6" fill="#9aa0d4"/><path d="M295.8 461.7l3-3 3 3 M295.8 464.7l3-3 3 3" fill="none" stroke="#fff" stroke-width="1.1"/><path d="M297.5 483.5h5l-2.5 3z" fill="#111"/><path d="M297.5 504.5h5l-2.5 3z" fill="#111"/><rect x="293.5" y="520.5" width="12" height="12" fill="#fff" stroke="#333" stroke-width="1"/><rect x="293.5" y="541.5" width="12" height="12" fill="#fff" stroke="#333" stroke-width="1"/><circle cx="298.8" cy="570.5" r="6.6" fill="#9aa0d4"/><path d="M295.8 570.7l3-3 3 3 M295.8 573.7l3-3 3 3" fill="none" stroke="#fff" stroke-width="1.1"/><path d="M297.5 592.5h5l-2.5 3z" fill="#111"/><path d="M297.5 613.5h5l-2.5 3z" fill="#111"/><path d="M297.5 634.5h5l-2.5 3z" fill="#111"/><rect x="290.5" y="652.5" width="10" height="9" fill="#fff" stroke="#3a6aa8" stroke-width="1"/><path d="M292 655h5 M292 657h4 M292 659h3" stroke="#888" stroke-width="0.7"/><path d="M295.5 659.5l6-6" stroke="#333" stroke-width="1.6"/><path d="M301 652.5l1.5 1.5" stroke="#e0a020" stroke-width="1.6"/><circle cx="298.8" cy="679.5" r="6.6" fill="#9aa0d4"/><path d="M295.8 679.7l3-3 3 3 M295.8 682.7l3-3 3 3" fill="none" stroke="#fff" stroke-width="1.1"/><path d="M312.5 289l4.5-4.5 4.5 4.5" fill="none" stroke="#555" stroke-width="1.2"/><path d="M312.5 771.5l4.5 4.5 4.5-4.5" fill="none" stroke="#555" stroke-width="1.2"/></svg>
<div class="r" style="left:165.5px;top:344px;width:143px;height:27.5px;background:#ffffff;box-sizing:border-box;border:1px solid #222;box-shadow:3px 3px 3px rgba(0,0,0,0.35);"></div>
<div class="r" style="left:166.5px;top:345px;width:141px;height:12.5px;background:#0078d7;"></div>
<div class="t" style="left:168px;top:346.19px;font-size:11px;color:#fff;font-weight:normal;">Einachsig</div>
<div class="t" style="left:168px;top:359.19px;font-size:11px;color:#111;font-weight:normal;">Zweiachsig</div>
<div class="r" style="left:329px;top:160px;width:1271px;height:26px;background:#bccde3;"></div>
<div class="r" style="left:329px;top:160px;width:1271px;height:1px;background:#aebdd0;"></div>
<div class="r" style="left:329px;top:183.5px;width:1271px;height:1.5px;background:#e6eef8;"></div>
<div class="r" style="left:335px;top:164px;width:56px;height:21px;background:#f3f7fc;border-radius:3px 3px 0 0;"></div>
<div class="t" style="left:342px;top:168.07px;font-size:11.5px;color:#111;font-weight:normal;">Eingabe</div>
<div class="t" style="left:405px;top:168.07px;font-size:11.5px;color:#111;font-weight:normal;">Dokument</div>
<div class="r" style="left:329px;top:185px;width:1270px;height:665px;background:#ffffff;box-sizing:border-box;border-top:2px solid #6b6b6b;border-left:2px solid #6b6b6b;border-right:1px solid #e2e2e2;"></div>
<div class="r" style="left:1599px;top:186px;width:1px;height:664px;background:#f0f0f0;"></div>
<div class="t" style="left:340px;top:197.71px;font-size:13.1px;color:#111;font-weight:normal;">Stahlbetonbalken über 2 Felder, DIN EN 1992:2015, Material C 30/37 B500A, Querschnitt konstant PO 200/20/40/80, mit Eigengewicht</div>
<svg style="left:330px;top:187px" width="1268" height="662" viewBox="330 187 1268 662"><path d="M442.3 342V366.5" stroke="#a00000" stroke-width="1.8"/><path d="M439.3 365.5L442.3 378.5L445.3 365.5z" fill="#b00000"/><path d="M612.3 335V366.5" stroke="#a00000" stroke-width="1.8"/><path d="M609.3 365.5L612.3 378.5L615.3 365.5z" fill="#b00000"/><path d="M782.5 345V366.5" stroke="#a00000" stroke-width="1.8"/><path d="M779.5 365.5L782.5 378.5L785.5 365.5z" fill="#b00000"/><path d="M1055.2 360V372" stroke="#a00000" stroke-width="1"/><path d="M1053.2 371.5L1055.2 378.5L1057.2 371.5z" fill="#b00000"/><path d="M1327 332V366.5" stroke="#a00000" stroke-width="1.8"/><path d="M1324.0 365.5L1327 378.5L1330.0 365.5z" fill="#b00000"/><text x="447" y="354" font-family="Liberation Sans" font-size="12" fill="#111">20,0</text><text x="617.5" y="347" font-family="Liberation Sans" font-size="12" fill="#111">23,5</text><text x="787.5" y="357" font-family="Liberation Sans" font-size="12" fill="#111">18,3</text><text x="1060" y="372" font-family="Liberation Sans" font-size="12" fill="#111">10,5</text><text x="1332" y="345" font-family="Liberation Sans" font-size="12" fill="#111">25,0</text><rect x="442.3" y="383.5" width="1014.3" height="47" fill="#f5e3e3" stroke="#b01818" stroke-width="1.3"/><path d="M442.30 383.5V418" stroke="#a80000" stroke-width="2"/><path d="M439.10 416.5L442.30 430L445.50 416.5z" fill="#b00000"/><path d="M462.19 383.5V418" stroke="#a80000" stroke-width="2"/><path d="M458.99 416.5L462.19 430L465.39 416.5z" fill="#b00000"/><path d="M482.08 383.5V418" stroke="#a80000" stroke-width="2"/><path d="M478.88 416.5L482.08 430L485.28 416.5z" fill="#b00000"/><path d="M501.96 383.5V418" stroke="#a80000" stroke-width="2"/><path d="M498.76 416.5L501.96 430L505.16 416.5z" fill="#b00000"/><path d="M521.85 383.5V418" stroke="#a80000" stroke-width="2"/><path d="M518.65 416.5L521.85 430L525.05 416.5z" fill="#b00000"/><path d="M541.74 383.5V418" stroke="#a80000" stroke-width="2"/><path d="M538.54 416.5L541.74 430L544.94 416.5z" fill="#b00000"/><path d="M561.63 383.5V418" stroke="#a80000" stroke-width="2"/><path d="M558.43 416.5L561.63 430L564.83 416.5z" fill="#b00000"/><path d="M581.52 383.5V418" stroke="#a80000" stroke-width="2"/><path d="M578.32 416.5L581.52 430L584.72 416.5z" fill="#b00000"/><path d="M601.41 383.5V418" stroke="#a80000" stroke-width="2"/><path d="M598.21 416.5L601.41 430L604.61 416.5z" fill="#b00000"/><path d="M621.29 383.5V418" stroke="#a80000" stroke-width="2"/><path d="M618.09 416.5L621.29 430L624.49 416.5z" fill="#b00000"/><path d="M641.18 383.5V418" stroke="#a80000" stroke-width="2"/><path d="M637.98 416.5L641.18 430L644.38 416.5z" fill="#b00000"/><path d="M661.07 383.5V418" stroke="#a80000" stroke-width="2"/><path d="M657.87 416.5L661.07 430L664.27 416.5z" fill="#b00000"/><path d="M680.96 383.5V418" stroke="#a80000" stroke-width="2"/><path d="M677.76 416.5L680.96 430L684.16 416.5z" fill="#b00000"/><path d="M700.85 383.5V418" stroke="#a80000" stroke-width="2"/><path d="M697.65 416.5L700.85 430L704.05 416.5z" fill="#b00000"/><path d="M720.74 383.5V418" stroke="#a80000" stroke-width="2"/><path d="M717.54 416.5L720.74 430L723.94 416.5z" fill="#b00000"/><path d="M740.62 383.5V418" stroke="#a80000" stroke-width="2"/><path d="M737.42 416.5L740.62 430L743.82 416.5z" fill="#b00000"/><path d="M760.51 383.5V418" stroke="#a80000" stroke-width="2"/><path d="M757.31 416.5L760.51 430L763.71 416.5z" fill="#b00000"/><path d="M780.40 383.5V418" stroke="#a80000" stroke-width="2"/><path d="M777.20 416.5L780.40 430L783.60 416.5z" fill="#b00000"/><path d="M800.29 383.5V418" stroke="#a80000" stroke-width="2"/><path d="M797.09 416.5L800.29 430L803.49 416.5z" fill="#b00000"/><path d="M820.18 383.5V418" stroke="#a80000" stroke-width="2"/><path d="M816.98 416.5L820.18 430L823.38 416.5z" fill="#b00000"/><path d="M840.06 383.5V418" stroke="#a80000" stroke-width="2"/><path d="M836.86 416.5L840.06 430L843.26 416.5z" fill="#b00000"/><path d="M859.95 383.5V418" stroke="#a80000" stroke-width="2"/><path d="M856.75 416.5L859.95 430L863.15 416.5z" fill="#b00000"/><path d="M879.84 383.5V418" stroke="#a80000" stroke-width="2"/><path d="M876.64 416.5L879.84 430L883.04 416.5z" fill="#b00000"/><path d="M899.73 383.5V418" stroke="#a80000" stroke-width="2"/><path d="M896.53 416.5L899.73 430L902.93 416.5z" fill="#b00000"/><path d="M919.62 383.5V418" stroke="#a80000" stroke-width="2"/><path d="M916.42 416.5L919.62 430L922.82 416.5z" fill="#b00000"/><path d="M939.51 383.5V418" stroke="#a80000" stroke-width="2"/><path d="M936.31 416.5L939.51 430L942.71 416.5z" fill="#b00000"/><path d="M959.39 383.5V418" stroke="#a80000" stroke-width="2"/><path d="M956.19 416.5L959.39 430L962.59 416.5z" fill="#b00000"/><path d="M979.28 383.5V418" stroke="#a80000" stroke-width="2"/><path d="M976.08 416.5L979.28 430L982.48 416.5z" fill="#b00000"/><path d="M999.17 383.5V418" stroke="#a80000" stroke-width="2"/><path d="M995.97 416.5L999.17 430L1002.37 416.5z" fill="#b00000"/><path d="M1019.06 383.5V418" stroke="#a80000" stroke-width="2"/><path d="M1015.86 416.5L1019.06 430L1022.26 416.5z" fill="#b00000"/><path d="M1038.95 383.5V418" stroke="#a80000" stroke-width="2"/><path d="M1035.75 416.5L1038.95 430L1042.15 416.5z" fill="#b00000"/><path d="M1058.84 383.5V418" stroke="#a80000" stroke-width="2"/><path d="M1055.64 416.5L1058.84 430L1062.04 416.5z" fill="#b00000"/><path d="M1078.72 383.5V418" stroke="#a80000" stroke-width="2"/><path d="M1075.52 416.5L1078.72 430L1081.92 416.5z" fill="#b00000"/><path d="M1098.61 383.5V418" stroke="#a80000" stroke-width="2"/><path d="M1095.41 416.5L1098.61 430L1101.81 416.5z" fill="#b00000"/><path d="M1118.50 383.5V418" stroke="#a80000" stroke-width="2"/><path d="M1115.30 416.5L1118.50 430L1121.70 416.5z" fill="#b00000"/><path d="M1138.39 383.5V418" stroke="#a80000" stroke-width="2"/><path d="M1135.19 416.5L1138.39 430L1141.59 416.5z" fill="#b00000"/><path d="M1158.28 383.5V418" stroke="#a80000" stroke-width="2"/><path d="M1155.08 416.5L1158.28 430L1161.48 416.5z" fill="#b00000"/><path d="M1178.16 383.5V418" stroke="#a80000" stroke-width="2"/><path d="M1174.96 416.5L1178.16 430L1181.36 416.5z" fill="#b00000"/><path d="M1198.05 383.5V418" stroke="#a80000" stroke-width="2"/><path d="M1194.85 416.5L1198.05 430L1201.25 416.5z" fill="#b00000"/><path d="M1217.94 383.5V418" stroke="#a80000" stroke-width="2"/><path d="M1214.74 416.5L1217.94 430L1221.14 416.5z" fill="#b00000"/><path d="M1237.83 383.5V418" stroke="#a80000" stroke-width="2"/><path d="M1234.63 416.5L1237.83 430L1241.03 416.5z" fill="#b00000"/><path d="M1257.72 383.5V418" stroke="#a80000" stroke-width="2"/><path d="M1254.52 416.5L1257.72 430L1260.92 416.5z" fill="#b00000"/><path d="M1277.61 383.5V418" stroke="#a80000" stroke-width="2"/><path d="M1274.41 416.5L1277.61 430L1280.81 416.5z" fill="#b00000"/><path d="M1297.49 383.5V418" stroke="#a80000" stroke-width="2"/><path d="M1294.29 416.5L1297.49 430L1300.69 416.5z" fill="#b00000"/><path d="M1317.38 383.5V418" stroke="#a80000" stroke-width="2"/><path d="M1314.18 416.5L1317.38 430L1320.58 416.5z" fill="#b00000"/><path d="M1337.27 383.5V418" stroke="#a80000" stroke-width="2"/><path d="M1334.07 416.5L1337.27 430L1340.47 416.5z" fill="#b00000"/><path d="M1357.16 383.5V418" stroke="#a80000" stroke-width="2"/><path d="M1353.96 416.5L1357.16 430L1360.36 416.5z" fill="#b00000"/><path d="M1377.05 383.5V418" stroke="#a80000" stroke-width="2"/><path d="M1373.85 416.5L1377.05 430L1380.25 416.5z" fill="#b00000"/><path d="M1396.94 383.5V418" stroke="#a80000" stroke-width="2"/><path d="M1393.74 416.5L1396.94 430L1400.14 416.5z" fill="#b00000"/><path d="M1416.82 383.5V418" stroke="#a80000" stroke-width="2"/><path d="M1413.62 416.5L1416.82 430L1420.02 416.5z" fill="#b00000"/><path d="M1436.71 383.5V418" stroke="#a80000" stroke-width="2"/><path d="M1433.51 416.5L1436.71 430L1439.91 416.5z" fill="#b00000"/><path d="M1456.60 383.5V418" stroke="#a80000" stroke-width="2"/><path d="M1453.40 416.5L1456.60 430L1459.80 416.5z" fill="#b00000"/><rect x="442.3" y="434.5" width="1014.3" height="15.5" fill="#e4f1f1" stroke="#3f9c9c" stroke-width="1.3"/><path d="M442.30 434.5V447" stroke="#3f9c9c" stroke-width="0.9"/><path d="M441.00 446L442.30 449.5L443.60 446z" fill="#2f8c8c"/><path d="M462.19 434.5V447" stroke="#3f9c9c" stroke-width="0.9"/><path d="M460.89 446L462.19 449.5L463.49 446z" fill="#2f8c8c"/><path d="M482.08 434.5V447" stroke="#3f9c9c" stroke-width="0.9"/><path d="M480.78 446L482.08 449.5L483.38 446z" fill="#2f8c8c"/><path d="M501.96 434.5V447" stroke="#3f9c9c" stroke-width="0.9"/><path d="M500.66 446L501.96 449.5L503.26 446z" fill="#2f8c8c"/><path d="M521.85 434.5V447" stroke="#3f9c9c" stroke-width="0.9"/><path d="M520.55 446L521.85 449.5L523.15 446z" fill="#2f8c8c"/><path d="M541.74 434.5V447" stroke="#3f9c9c" stroke-width="0.9"/><path d="M540.44 446L541.74 449.5L543.04 446z" fill="#2f8c8c"/><path d="M561.63 434.5V447" stroke="#3f9c9c" stroke-width="0.9"/><path d="M560.33 446L561.63 449.5L562.93 446z" fill="#2f8c8c"/><path d="M581.52 434.5V447" stroke="#3f9c9c" stroke-width="0.9"/><path d="M580.22 446L581.52 449.5L582.82 446z" fill="#2f8c8c"/><path d="M601.41 434.5V447" stroke="#3f9c9c" stroke-width="0.9"/><path d="M600.11 446L601.41 449.5L602.71 446z" fill="#2f8c8c"/><path d="M621.29 434.5V447" stroke="#3f9c9c" stroke-width="0.9"/><path d="M619.99 446L621.29 449.5L622.59 446z" fill="#2f8c8c"/><path d="M641.18 434.5V447" stroke="#3f9c9c" stroke-width="0.9"/><path d="M639.88 446L641.18 449.5L642.48 446z" fill="#2f8c8c"/><path d="M661.07 434.5V447" stroke="#3f9c9c" stroke-width="0.9"/><path d="M659.77 446L661.07 449.5L662.37 446z" fill="#2f8c8c"/><path d="M680.96 434.5V447" stroke="#3f9c9c" stroke-width="0.9"/><path d="M679.66 446L680.96 449.5L682.26 446z" fill="#2f8c8c"/><path d="M700.85 434.5V447" stroke="#3f9c9c" stroke-width="0.9"/><path d="M699.55 446L700.85 449.5L702.15 446z" fill="#2f8c8c"/><path d="M720.74 434.5V447" stroke="#3f9c9c" stroke-width="0.9"/><path d="M719.44 446L720.74 449.5L722.04 446z" fill="#2f8c8c"/><path d="M740.62 434.5V447" stroke="#3f9c9c" stroke-width="0.9"/><path d="M739.32 446L740.62 449.5L741.92 446z" fill="#2f8c8c"/><path d="M760.51 434.5V447" stroke="#3f9c9c" stroke-width="0.9"/><path d="M759.21 446L760.51 449.5L761.81 446z" fill="#2f8c8c"/><path d="M780.40 434.5V447" stroke="#3f9c9c" stroke-width="0.9"/><path d="M779.10 446L780.40 449.5L781.70 446z" fill="#2f8c8c"/><path d="M800.29 434.5V447" stroke="#3f9c9c" stroke-width="0.9"/><path d="M798.99 446L800.29 449.5L801.59 446z" fill="#2f8c8c"/><path d="M820.18 434.5V447" stroke="#3f9c9c" stroke-width="0.9"/><path d="M818.88 446L820.18 449.5L821.48 446z" fill="#2f8c8c"/><path d="M840.06 434.5V447" stroke="#3f9c9c" stroke-width="0.9"/><path d="M838.76 446L840.06 449.5L841.36 446z" fill="#2f8c8c"/><path d="M859.95 434.5V447" stroke="#3f9c9c" stroke-width="0.9"/><path d="M858.65 446L859.95 449.5L861.25 446z" fill="#2f8c8c"/><path d="M879.84 434.5V447" stroke="#3f9c9c" stroke-width="0.9"/><path d="M878.54 446L879.84 449.5L881.14 446z" fill="#2f8c8c"/><path d="M899.73 434.5V447" stroke="#3f9c9c" stroke-width="0.9"/><path d="M898.43 446L899.73 449.5L901.03 446z" fill="#2f8c8c"/><path d="M919.62 434.5V447" stroke="#3f9c9c" stroke-width="0.9"/><path d="M918.32 446L919.62 449.5L920.92 446z" fill="#2f8c8c"/><path d="M939.51 434.5V447" stroke="#3f9c9c" stroke-width="0.9"/><path d="M938.21 446L939.51 449.5L940.81 446z" fill="#2f8c8c"/><path d="M959.39 434.5V447" stroke="#3f9c9c" stroke-width="0.9"/><path d="M958.09 446L959.39 449.5L960.69 446z" fill="#2f8c8c"/><path d="M979.28 434.5V447" stroke="#3f9c9c" stroke-width="0.9"/><path d="M977.98 446L979.28 449.5L980.58 446z" fill="#2f8c8c"/><path d="M999.17 434.5V447" stroke="#3f9c9c" stroke-width="0.9"/><path d="M997.87 446L999.17 449.5L1000.47 446z" fill="#2f8c8c"/><path d="M1019.06 434.5V447" stroke="#3f9c9c" stroke-width="0.9"/><path d="M1017.76 446L1019.06 449.5L1020.36 446z" fill="#2f8c8c"/><path d="M1038.95 434.5V447" stroke="#3f9c9c" stroke-width="0.9"/><path d="M1037.65 446L1038.95 449.5L1040.25 446z" fill="#2f8c8c"/><path d="M1058.84 434.5V447" stroke="#3f9c9c" stroke-width="0.9"/><path d="M1057.54 446L1058.84 449.5L1060.14 446z" fill="#2f8c8c"/><path d="M1078.72 434.5V447" stroke="#3f9c9c" stroke-width="0.9"/><path d="M1077.42 446L1078.72 449.5L1080.02 446z" fill="#2f8c8c"/><path d="M1098.61 434.5V447" stroke="#3f9c9c" stroke-width="0.9"/><path d="M1097.31 446L1098.61 449.5L1099.91 446z" fill="#2f8c8c"/><path d="M1118.50 434.5V447" stroke="#3f9c9c" stroke-width="0.9"/><path d="M1117.20 446L1118.50 449.5L1119.80 446z" fill="#2f8c8c"/><path d="M1138.39 434.5V447" stroke="#3f9c9c" stroke-width="0.9"/><path d="M1137.09 446L1138.39 449.5L1139.69 446z" fill="#2f8c8c"/><path d="M1158.28 434.5V447" stroke="#3f9c9c" stroke-width="0.9"/><path d="M1156.98 446L1158.28 449.5L1159.58 446z" fill="#2f8c8c"/><path d="M1178.16 434.5V447" stroke="#3f9c9c" stroke-width="0.9"/><path d="M1176.86 446L1178.16 449.5L1179.46 446z" fill="#2f8c8c"/><path d="M1198.05 434.5V447" stroke="#3f9c9c" stroke-width="0.9"/><path d="M1196.75 446L1198.05 449.5L1199.35 446z" fill="#2f8c8c"/><path d="M1217.94 434.5V447" stroke="#3f9c9c" stroke-width="0.9"/><path d="M1216.64 446L1217.94 449.5L1219.24 446z" fill="#2f8c8c"/><path d="M1237.83 434.5V447" stroke="#3f9c9c" stroke-width="0.9"/><path d="M1236.53 446L1237.83 449.5L1239.13 446z" fill="#2f8c8c"/><path d="M1257.72 434.5V447" stroke="#3f9c9c" stroke-width="0.9"/><path d="M1256.42 446L1257.72 449.5L1259.02 446z" fill="#2f8c8c"/><path d="M1277.61 434.5V447" stroke="#3f9c9c" stroke-width="0.9"/><path d="M1276.31 446L1277.61 449.5L1278.91 446z" fill="#2f8c8c"/><path d="M1297.49 434.5V447" stroke="#3f9c9c" stroke-width="0.9"/><path d="M1296.19 446L1297.49 449.5L1298.79 446z" fill="#2f8c8c"/><path d="M1317.38 434.5V447" stroke="#3f9c9c" stroke-width="0.9"/><path d="M1316.08 446L1317.38 449.5L1318.68 446z" fill="#2f8c8c"/><path d="M1337.27 434.5V447" stroke="#3f9c9c" stroke-width="0.9"/><path d="M1335.97 446L1337.27 449.5L1338.57 446z" fill="#2f8c8c"/><path d="M1357.16 434.5V447" stroke="#3f9c9c" stroke-width="0.9"/><path d="M1355.86 446L1357.16 449.5L1358.46 446z" fill="#2f8c8c"/><path d="M1377.05 434.5V447" stroke="#3f9c9c" stroke-width="0.9"/><path d="M1375.75 446L1377.05 449.5L1378.35 446z" fill="#2f8c8c"/><path d="M1396.94 434.5V447" stroke="#3f9c9c" stroke-width="0.9"/><path d="M1395.64 446L1396.94 449.5L1398.24 446z" fill="#2f8c8c"/><path d="M1416.82 434.5V447" stroke="#3f9c9c" stroke-width="0.9"/><path d="M1415.52 446L1416.82 449.5L1418.12 446z" fill="#2f8c8c"/><path d="M1436.71 434.5V447" stroke="#3f9c9c" stroke-width="0.9"/><path d="M1435.41 446L1436.71 449.5L1438.01 446z" fill="#2f8c8c"/><path d="M1456.60 434.5V447" stroke="#3f9c9c" stroke-width="0.9"/><path d="M1455.30 446L1456.60 449.5L1457.90 446z" fill="#2f8c8c"/><rect x="928.7" y="399" width="39" height="14.5" rx="1.5" fill="#fff" stroke="#b4b4b4" stroke-width="1"/><text x="948.2" y="410.3" text-anchor="middle" font-family="Liberation Sans" font-size="12" fill="#111">60,00</text><rect x="928.7" y="434" width="39" height="14.5" rx="1.5" fill="#fff" stroke="#b4b4b4" stroke-width="1"/><text x="948.2" y="445.3" text-anchor="middle" font-family="Liberation Sans" font-size="12" fill="#111">15,00</text><path d="M534.5 462.5H582.5V477.5H578L574 481.5L570 477.5H534.5z" fill="#fdf5b4" stroke="#555" stroke-width="1"/><text x="538.0" y="474.5" font-family="Liberation Sans" font-size="12" fill="#111">Kra li</text><path d="M909.2 462.5H956.5V477.5H952.5L948.5 481.5L944.5 477.5H909.2z" fill="#fdf5b4" stroke="#555" stroke-width="1"/><text x="912.7" y="474.5" font-family="Liberation Sans" font-size="12" fill="#111">Feld 1</text><path d="M1401.2 462.5H1448.7V477.5H1444.5L1440.5 481.5L1436.5 477.5H1401.2z" fill="#fdf5b4" stroke="#555" stroke-width="1"/><text x="1404.7" y="474.5" font-family="Liberation Sans" font-size="12" fill="#111">Feld 2</text><rect x="442.2" y="481.6" width="1025.3" height="54.4" fill="#c8c8c8" stroke="#333" stroke-width="1.5"/><rect x="442.2" y="481.6" width="1025.3" height="13.7" fill="#a0a0a0" stroke="#333" stroke-width="1.5"/><rect x="673.5" y="512.5" width="34" height="13.5" fill="#fff" stroke="#111" stroke-width="1"/><text x="536" y="527" font-family="Liberation Sans" font-size="13.2" fill="#111">Stahlbetonbalken C 30/37</text><text x="899.5" y="514" font-family="Liberation Sans" font-size="13.2" fill="#111">PO 200/20/40/80</text><circle cx="1087" cy="520.8" r="5" fill="#fff" stroke="#111" stroke-width="1.2"/><circle cx="1291.2" cy="520.8" r="5" fill="#fff" stroke="#111" stroke-width="1.2"/><rect x="597.3" y="536.5" width="16.5" height="25" fill="#e2e2e2" stroke="#b03a3a" stroke-width="1"/><path d="M597.3 544.5h16.5 M597.3 552.5h16.5" stroke="#a03030" stroke-width="1"/><rect x="971.3" y="536.5" width="16.5" height="25" fill="#e2e2e2" stroke="#b03a3a" stroke-width="1"/><path d="M971.3 544.5h16.5 M971.3 552.5h16.5" stroke="#a03030" stroke-width="1"/><rect x="1450.8" y="536.5" width="16.5" height="25" fill="#e2e2e2" stroke="#b03a3a" stroke-width="1"/><path d="M1450.8 544.5h16.5 M1450.8 552.5h16.5" stroke="#a03030" stroke-width="1"/><circle cx="418.5" cy="509" r="5.4" fill="#74749c"/><rect x="412.5" y="507.9" width="12" height="2.2" fill="#fff"/><path d="M419.5 510h6v6h-6z" fill="#fff"/><text x="420.7" y="517" font-family="Liberation Sans" font-size="10" fill="#111" textLength="4.6" lengthAdjust="spacingAndGlyphs">K</text><circle cx="1490.7" cy="489.5" r="5.4" fill="#74749c"/><rect x="1484.7" y="488.4" width="12" height="2.2" fill="#fff"/><rect x="1489.6000000000001" y="483.5" width="2.2" height="12" fill="#fff"/><path d="M1491.7 490.5h6v6h-6z" fill="#fff"/><text x="1492.9" y="497.5" font-family="Liberation Sans" font-size="10" fill="#111" textLength="4.6" lengthAdjust="spacingAndGlyphs">F</text><circle cx="1510.7" cy="489.5" r="5.4" fill="#74749c"/><rect x="1504.7" y="488.4" width="12" height="2.2" fill="#fff"/><path d="M1511.7 490.5h6v6h-6z" fill="#fff"/><text x="1512.9" y="497.5" font-family="Liberation Sans" font-size="10" fill="#111" textLength="4.6" lengthAdjust="spacingAndGlyphs">F</text><circle cx="1490.7" cy="509" r="5.4" fill="#74749c"/><rect x="1484.7" y="507.9" width="12" height="2.2" fill="#fff"/><rect x="1489.6000000000001" y="503" width="2.2" height="12" fill="#fff"/><path d="M1491.7 510h6v6h-6z" fill="#fff"/><text x="1492.9" y="517" font-family="Liberation Sans" font-size="10" fill="#111" textLength="4.6" lengthAdjust="spacingAndGlyphs">K</text><path d="M442.5 577.5l3 3H945.5l3.5 3 3.5-3H1453l3-3" fill="none" stroke="#8c8cb8" stroke-width="1.2"/><text x="870.8" y="595" font-family="Liberation Sans" font-size="11.4" fill="#111" stroke="#111" stroke-width="0.35" textLength="156" lengthAdjust="spacingAndGlyphs">Fuge 1 (ges. Trägerlänge - rau)</text><path d="M434 624.8H1464" stroke="#b4b4b4" stroke-width="1.8"/><path d="M434 648.5H1464" stroke="#7a7aa8" stroke-width="1.2"/><path d="M434 672H1475" stroke="#b4b4b4" stroke-width="1.8"/><path d="M434 695.5H1464" stroke="#888" stroke-width="1.3"/><path d="M442.2 604V703.5" stroke="#888" stroke-width="1"/><path d="M1456.3 604V655.5" stroke="#888" stroke-width="1"/><path d="M1456.3 675V703.5" stroke="#888" stroke-width="1"/><path d="M605.5 604V655.5" stroke="#888" stroke-width="1"/><path d="M979.7 604V655.5" stroke="#888" stroke-width="1"/><path d="M673.7 604V632.5" stroke="#888" stroke-width="1"/><path d="M707.5 604V632.5" stroke="#888" stroke-width="1"/><path d="M1082 604V632.5" stroke="#888" stroke-width="1"/><path d="M1092 604V632.5" stroke="#888" stroke-width="1"/><path d="M1286.2 604V632.5" stroke="#888" stroke-width="1"/><path d="M1296.2 604V632.5" stroke="#888" stroke-width="1"/><path d="M597.5 651V679.5" stroke="#888" stroke-width="1"/><path d="M613.2 651V679.5" stroke="#888" stroke-width="1"/><path d="M971.5 651V679.5" stroke="#888" stroke-width="1"/><path d="M988 651V679.5" stroke="#888" stroke-width="1"/><path d="M1450.8 651V679.5" stroke="#888" stroke-width="1"/><path d="M1467.5 651V679.5" stroke="#888" stroke-width="1"/><path d="M442.2 624.8V648.5" stroke="#7a7aa8" stroke-width="1"/><path d="M605.5 624.8V655.5 M979.7 624.8V655.5 M1456.3 624.8V655.5" stroke="#7a7aa8" stroke-width="1"/><path d="M439.2 627.8L445.2 621.8" stroke="#888" stroke-width="1"/><path d="M602.5 627.8L608.5 621.8" stroke="#888" stroke-width="1"/><path d="M670.7 627.8L676.7 621.8" stroke="#888" stroke-width="1"/><path d="M704.5 627.8L710.5 621.8" stroke="#888" stroke-width="1"/><path d="M976.7 627.8L982.7 621.8" stroke="#888" stroke-width="1"/><path d="M1079 627.8L1085 621.8" stroke="#888" stroke-width="1"/><path d="M1089 627.8L1095 621.8" stroke="#888" stroke-width="1"/><path d="M1283.2 627.8L1289.2 621.8" stroke="#888" stroke-width="1"/><path d="M1293.2 627.8L1299.2 621.8" stroke="#888" stroke-width="1"/><path d="M1453.3 627.8L1459.3 621.8" stroke="#888" stroke-width="1"/><path d="M439.2 651.5L445.2 645.5" stroke="#7a7aa8" stroke-width="1"/><path d="M602.5 651.5L608.5 645.5" stroke="#7a7aa8" stroke-width="1"/><path d="M976.7 651.5L982.7 645.5" stroke="#7a7aa8" stroke-width="1"/><path d="M1453.3 651.5L1459.3 645.5" stroke="#7a7aa8" stroke-width="1"/><path d="M439.2 675L445.2 669" stroke="#888" stroke-width="1"/><path d="M594.5 675L600.5 669" stroke="#888" stroke-width="1"/><path d="M610.2 675L616.2 669" stroke="#888" stroke-width="1"/><path d="M968.5 675L974.5 669" stroke="#888" stroke-width="1"/><path d="M985 675L991 669" stroke="#888" stroke-width="1"/><path d="M1447.8 675L1453.8 669" stroke="#888" stroke-width="1"/><path d="M1464.5 675L1470.5 669" stroke="#888" stroke-width="1"/><path d="M439.2 698.5L445.2 692.5" stroke="#888" stroke-width="1"/><path d="M1453.3 698.5L1459.3 692.5" stroke="#888" stroke-width="1"/><text x="523" y="621" text-anchor="middle" font-family="Liberation Sans" font-size="11.5" fill="#9a9a9a">2,40</text><text x="639.5" y="621" text-anchor="middle" font-family="Liberation Sans" font-size="11.5" fill="#9a9a9a">1,00</text><text x="690.5" y="621" text-anchor="middle" font-family="Liberation Sans" font-size="11.5" fill="#9a9a9a">50</text><text x="843.5" y="621" text-anchor="middle" font-family="Liberation Sans" font-size="11.5" fill="#9a9a9a">4,00</text><text x="1030.5" y="621" text-anchor="middle" font-family="Liberation Sans" font-size="11.5" fill="#9a9a9a">1,50</text><text x="1087" y="621" text-anchor="middle" font-family="Liberation Sans" font-size="11.5" fill="#9a9a9a">15</text><text x="1188" y="621" text-anchor="middle" font-family="Liberation Sans" font-size="11.5" fill="#9a9a9a">2,85</text><text x="1291.2" y="621" text-anchor="middle" font-family="Liberation Sans" font-size="11.5" fill="#9a9a9a">15</text><text x="1375.5" y="621" text-anchor="middle" font-family="Liberation Sans" font-size="11.5" fill="#9a9a9a">2,35</text><text x="523" y="644.7" text-anchor="middle" font-family="Liberation Sans" font-size="11.5" fill="#111">2,40</text><text x="792.5" y="644.7" text-anchor="middle" font-family="Liberation Sans" font-size="11.5" fill="#111">5,50</text><text x="1217" y="644.7" text-anchor="middle" font-family="Liberation Sans" font-size="11.5" fill="#111">7,00</text><text x="519" y="668" text-anchor="middle" font-family="Liberation Sans" font-size="11.5" fill="#9a9a9a">2,28</text><text x="605.5" y="668" text-anchor="middle" font-family="Liberation Sans" font-size="11.5" fill="#111">24</text><text x="792.5" y="668" text-anchor="middle" font-family="Liberation Sans" font-size="11.5" fill="#9a9a9a">5,26</text><text x="980" y="668" text-anchor="middle" font-family="Liberation Sans" font-size="11.5" fill="#111">24</text><text x="1218" y="668" text-anchor="middle" font-family="Liberation Sans" font-size="11.5" fill="#9a9a9a">6,80</text><text x="1459" y="668" text-anchor="middle" font-family="Liberation Sans" font-size="11.5" fill="#111">24</text><text x="949" y="692" text-anchor="middle" font-family="Liberation Sans" font-size="11.5" fill="#9a9a9a">14,90</text><path d="M397 782.5H437" stroke="#0000ff" stroke-width="2"/><path d="M430 777.5L446.5 782.5L430 787.5z" fill="#0000ff"/><path d="M397 782.5V820" stroke="#0000ff" stroke-width="2"/><path d="M392 815.5L397 831.5L402 815.5z" fill="#0000ff"/><circle cx="397" cy="782.5" r="3" fill="#ee0000"/><text x="448" y="788.5" font-family="Liberation Sans" font-size="14" fill="#111">X</text><text x="391.5" y="845" font-family="Liberation Sans" font-size="14" fill="#111">Z</text></svg>
<div class="r" style="left:329px;top:850px;width:1271px;height:4px;background:#f0f0f0;"></div>
<div class="r" style="left:331px;top:849px;width:1268px;height:1px;background:#e2e2e2;"></div>
<div class="r" style="left:329px;top:853px;width:1271px;height:1px;background:#dfe6ee;"></div>
<div class="r" style="left:329px;top:854px;width:1271px;height:24px;background:#bccde3;"></div>
<div class="r" style="left:862px;top:857px;width:110px;height:21px;background:#f0f4fa;border-radius:3px 3px 0 0;"></div>
<div class="t" style="left:364px;top:861.43px;font-size:11.3px;color:#111;font-weight:normal;">Felder/Abschnitte</div>
<div class="t" style="left:496px;top:861.43px;font-size:11.3px;color:#111;font-weight:normal;">Auflager</div>
<div class="t" style="left:582px;top:861.43px;font-size:11.3px;color:#111;font-weight:normal;">Gelenke</div>
<div class="t" style="left:668px;top:861.43px;font-size:11.3px;color:#111;font-weight:normal;">Querschnitte</div>
<div class="t" style="left:776px;top:861.43px;font-size:11.3px;color:#111;font-weight:normal;">Verbundfugen</div>
<div class="t" style="left:891px;top:861.43px;font-size:11.3px;color:#111;font-weight:normal;">Aussparungen</div>
<div class="t" style="left:1008px;top:861.43px;font-size:11.3px;color:#111;font-weight:normal;">Schnitte</div>
<div class="t" style="left:1092px;top:861.43px;font-size:11.3px;color:#111;font-weight:normal;">Lasten</div>
<svg style="left:0;top:0" width="1600" height="900" viewBox="0 0 1600 900"><rect x="340.5" y="860.5" width="14" height="13" fill="#f4f7fc" stroke="#a9b9d4" stroke-width="1"/><rect x="341" y="861" width="13" height="2.5" fill="#86a8e8"/><path d="M341 864h13" stroke="#c8d4ea" stroke-width="1"/><path d="M341 866.5h13 M341 869.5h13 M345 864v9 M349.5 864v9" stroke="#c0cadb" stroke-width="0.8"/><path d="M340.5 873.5h14" stroke="#4a5a78" stroke-width="1"/><rect x="473.5" y="860.5" width="14" height="13" fill="#f4f7fc" stroke="#a9b9d4" stroke-width="1"/><rect x="474" y="861" width="13" height="2.5" fill="#86a8e8"/><path d="M474 864h13" stroke="#c8d4ea" stroke-width="1"/><path d="M474 866.5h13 M474 869.5h13 M478 864v9 M482.5 864v9" stroke="#c0cadb" stroke-width="0.8"/><path d="M473.5 873.5h14" stroke="#4a5a78" stroke-width="1"/><rect x="559.5" y="860.5" width="14" height="13" fill="#f4f7fc" stroke="#a9b9d4" stroke-width="1"/><rect x="560" y="861" width="13" height="2.5" fill="#86a8e8"/><path d="M560 864h13" stroke="#c8d4ea" stroke-width="1"/><path d="M560 866.5h13 M560 869.5h13 M564 864v9 M568.5 864v9" stroke="#c0cadb" stroke-width="0.8"/><path d="M559.5 873.5h14" stroke="#4a5a78" stroke-width="1"/><rect x="645.5" y="860.5" width="14" height="13" fill="#f4f7fc" stroke="#a9b9d4" stroke-width="1"/><rect x="646" y="861" width="13" height="2.5" fill="#86a8e8"/><path d="M646 864h13" stroke="#c8d4ea" stroke-width="1"/><path d="M646 866.5h13 M646 869.5h13 M650 864v9 M654.5 864v9" stroke="#c0cadb" stroke-width="0.8"/><path d="M645.5 873.5h14" stroke="#4a5a78" stroke-width="1"/><rect x="752.5" y="860.5" width="14" height="13" fill="#f4f7fc" stroke="#a9b9d4" stroke-width="1"/><rect x="753" y="861" width="13" height="2.5" fill="#86a8e8"/><path d="M753 864h13" stroke="#c8d4ea" stroke-width="1"/><path d="M753 866.5h13 M753 869.5h13 M757 864v9 M761.5 864v9" stroke="#c0cadb" stroke-width="0.8"/><path d="M752.5 873.5h14" stroke="#4a5a78" stroke-width="1"/><rect x="868.5" y="860.5" width="14" height="13" fill="#f4f7fc" stroke="#a9b9d4" stroke-width="1"/><rect x="869" y="861" width="13" height="2.5" fill="#86a8e8"/><path d="M869 864h13" stroke="#c8d4ea" stroke-width="1"/><path d="M869 866.5h13 M869 869.5h13 M873 864v9 M877.5 864v9" stroke="#c0cadb" stroke-width="0.8"/><path d="M868.5 873.5h14" stroke="#4a5a78" stroke-width="1"/><rect x="984.5" y="860.5" width="14" height="13" fill="#f4f7fc" stroke="#a9b9d4" stroke-width="1"/><rect x="985" y="861" width="13" height="2.5" fill="#86a8e8"/><path d="M985 864h13" stroke="#c8d4ea" stroke-width="1"/><path d="M985 866.5h13 M985 869.5h13 M989 864v9 M993.5 864v9" stroke="#c0cadb" stroke-width="0.8"/><path d="M984.5 873.5h14" stroke="#4a5a78" stroke-width="1"/><rect x="1070.5" y="860.5" width="14" height="13" fill="#f4f7fc" stroke="#a9b9d4" stroke-width="1"/><rect x="1071" y="861" width="13" height="2.5" fill="#86a8e8"/><path d="M1071 864h13" stroke="#c8d4ea" stroke-width="1"/><path d="M1071 866.5h13 M1071 869.5h13 M1075 864v9 M1079.5 864v9" stroke="#c0cadb" stroke-width="0.8"/><path d="M1070.5 873.5h14" stroke="#4a5a78" stroke-width="1"/><path d="M1588.5 861.5l8 8 M1596.5 861.5l-8 8" stroke="#111" stroke-width="1.6"/></svg>
<div class="r" style="left:0px;top:878px;width:1600px;height:22px;background:#f1f0ee;"></div>
<div class="r" style="left:0px;top:878px;width:1600px;height:1px;background:#d4d4d4;"></div>
</body></html>
